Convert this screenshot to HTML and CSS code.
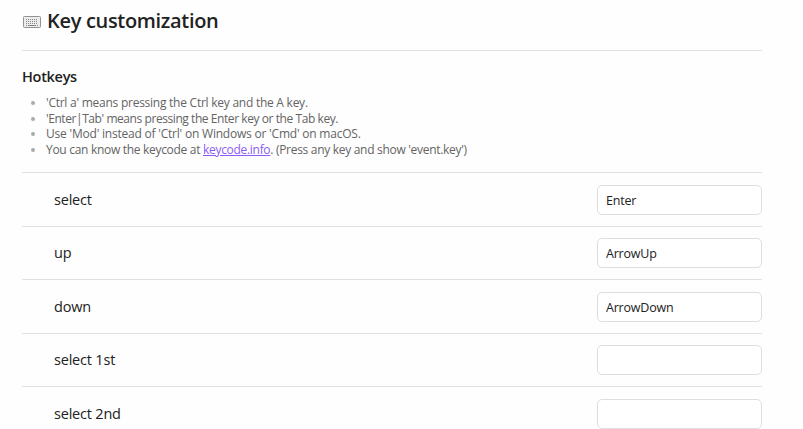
FILE: index.html
```html
<!DOCTYPE html>
<html lang="en">
<head>
<meta charset="utf-8">
<title>Key customization</title>
<link rel="stylesheet" href="styles.css">
</head>
<body>
<main class="settings">
  <header class="heading">
    <svg class="keyboard" viewBox="0 0 18 12" aria-hidden="true">
      <rect x=".5" y=".5" width="17" height="11" rx="1" fill="#ededed" stroke="#929292"/>
      <path d="M3 3.5h12M3 5.5h12M3 7.5h12" stroke="#858585" stroke-dasharray="1 1"/>
      <path d="M3 9.5h1M5 9.5h8M14 9.5h1" stroke="#858585"/>
    </svg>
    <h2 class="title">Key customization</h2>
  </header>
  <section class="intro">
    <h3 class="subtitle">Hotkeys</h3>
    <ul class="notes">
      <li class="snug">'Ctrl a' means pressing the Ctrl key and the A key.</li>
      <li class="tightest">'Enter|Tab' means pressing the Enter key or the Tab key.</li>
      <li>Use 'Mod' instead of 'Ctrl' on Windows or 'Cmd' on macOS.</li>
      <li class="tight">You can know the keycode at <a href="#">keycode.info</a>. (Press any key and show 'event.key')</li>
    </ul>
  </section>
  <label class="row"><span class="name">select</span><input class="field" type="text" value="Enter"></label>
  <label class="row"><span class="name">up</span><input class="field" type="text" value="ArrowUp"></label>
  <label class="row"><span class="name">down</span><input class="field" type="text" value="ArrowDown"></label>
  <label class="row"><span class="name">select 1st</span><input class="field" type="text"></label>
  <label class="row"><span class="name">select 2nd</span><input class="field" type="text"></label>
</main>
</body>
</html>
```
FILE: styles.css
```css
* { box-sizing: border-box; }
html, body { height: 100%; }
body {
  margin: 0;
  overflow: hidden;
  background: #fefefe;
  color: #222;
  font-family: "Open Sans", "Noto Sans", sans-serif;
}
.settings { width: 740px; margin-left: 22px; }
.heading {
  display: flex;
  align-items: center;
  height: 50px;
  padding-bottom: 8px;
}
.keyboard { width: 18px; height: 12px; margin: 2px 6px 0 1px; }
.title { margin: 0; font-size: 20px; font-weight: 600; letter-spacing: -0.32px; line-height: 26px; }
.intro { height: 122px; border-top: 1px solid #e0e0e0; padding-top: 17px; }
.subtitle { margin: 0; font-size: 14.5px; font-weight: 600; letter-spacing: -0.3px; line-height: 18px; }
.notes {
  margin: 9px 0 0;
  padding: 0 0 0 24px;
  color: #646464;
  font-size: 12px;
  letter-spacing: -0.21px;
  line-height: 15.7px;
}
.notes .snug { letter-spacing: -0.25px; }
.notes .tight { letter-spacing: -0.3px; }
.notes .tightest { letter-spacing: -0.43px; }
.notes li::marker { color: #ababab; }
.notes a { color: #8a5cf5; }
.row {
  display: flex;
  align-items: center;
  justify-content: space-between;
  height: 53.5px;
  padding: 1px 0 0 32px;
  border-top: 1px solid #e0e0e0;
}
.name { margin-top: -1px; font-size: 14.5px; letter-spacing: -0.2px; }
.field {
  width: 165px;
  height: 30px;
  padding: 1px 8px 0;
  border: 1px solid #dedede;
  border-radius: 5px;
  background: #fff;
  color: #222;
  font: 12.5px "Open Sans", "Noto Sans", sans-serif;
  letter-spacing: -0.2px;
}
```
